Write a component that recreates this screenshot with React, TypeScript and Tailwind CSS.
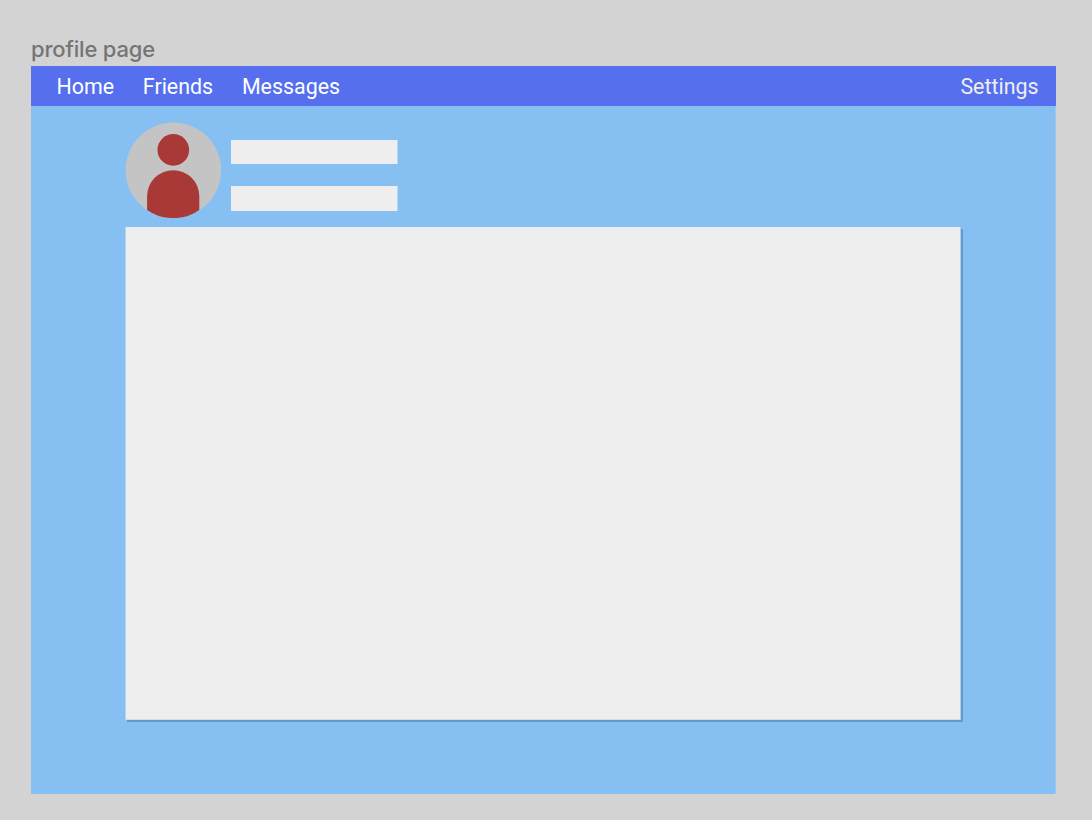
export default function App() {
  return (
    <div className="flex h-[820px] w-[1092px] flex-col overflow-hidden bg-[#d3d3d3] pl-[31px] pr-[36px] pt-[35px]">
      <h1 className="h-[31px] font-['Inter',sans-serif] text-[22px] leading-[28px] font-medium tracking-[-0.18px] text-[#757575]">profile page</h1>
      <main className="flex h-[728px] flex-col border-r border-r-[#a2c8e8] bg-[#86bff2]">
        <nav className="-mr-px flex h-10 shrink-0 items-center bg-[#566fee] pt-[2px] pl-[25.5px] pr-[17.5px] font-['Roboto',sans-serif] text-[21.4px] text-white">
          <a className="mr-[28.8px]">Home</a>
          <a className="mr-[28.8px]">Friends</a>
          <a>Messages</a>
          <a className="ml-auto text-[#eeeeee]">Settings</a>
        </nav>
        <section className="flex pl-[94px] pt-4">
          <svg className="h-24 w-24" viewBox="0 0 96 96">
            <circle cx="48.4" cy="48.3" r="47.8" fill="#c4c4c4" />
            <circle cx="48.3" cy="27.9" r="15.8" fill="#a83936" />
            <path d="M22.1 87.9V74.3a26.1 26.1 0 0 1 52.2 0v13.6Q63 96.1 48.3 96.1T22.1 87.9Z" fill="#a83936" />
          </svg>
          <div className="ml-[10px] mt-[18px] flex flex-col gap-[22px]">
            <div className="h-6 w-[167px] border-r border-r-[#bad7f0] bg-[#eeeeee]" />
            <div className="h-[25px] w-[167px] border-r border-r-[#bad7f0] bg-[#eeeeee]" />
          </div>
        </section>
        <section className="ml-[94px] mt-[9px] h-[493px] w-[836px] border-x border-b border-l-[#afd3f1] border-r-[#b2cee6] border-b-[#d3dfe8] bg-[#eeeeee] shadow-[2px_2px_0_#649ac9]" />
      </main>
    </div>
  );
}
